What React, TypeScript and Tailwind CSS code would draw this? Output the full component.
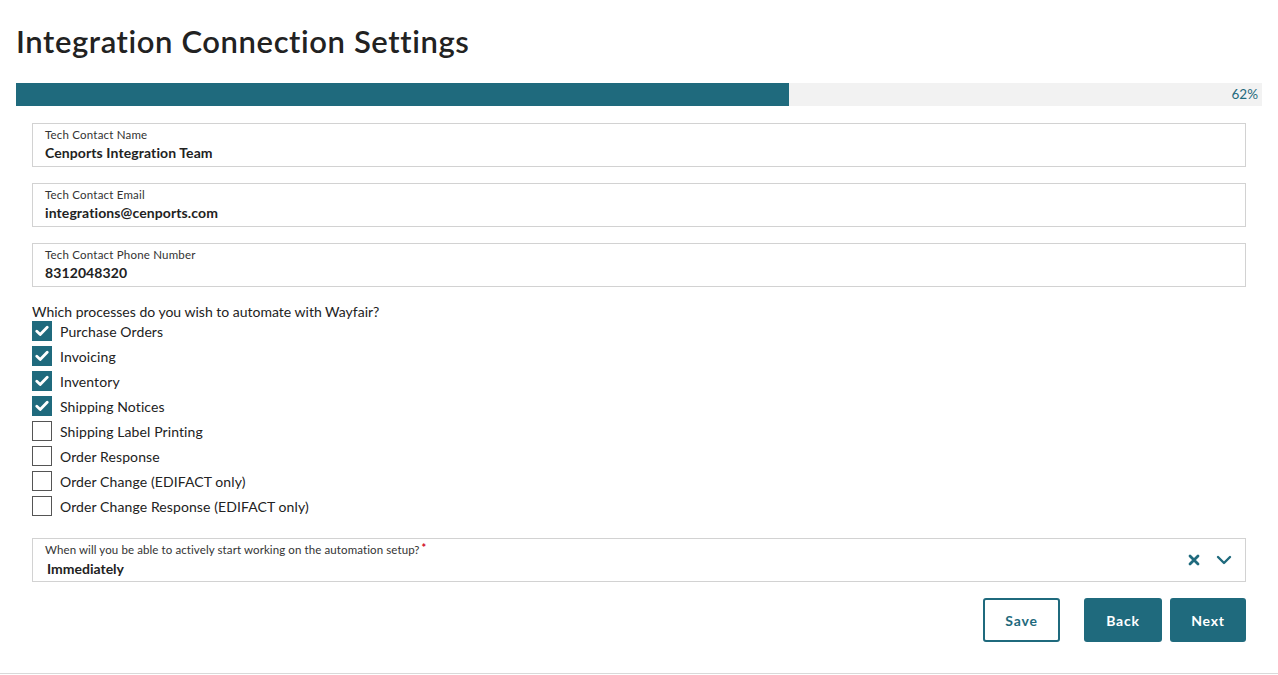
import { useState } from "react";

const font = { fontFamily: "Lato, 'Open Sans', sans-serif" };

const processes = [
  { label: "Purchase Orders", checked: true },
  { label: "Invoicing", checked: true },
  { label: "Inventory", checked: true },
  { label: "Shipping Notices", checked: true },
  { label: "Shipping Label Printing", checked: false },
  { label: "Order Response", checked: false },
  { label: "Order Change (EDIFACT only)", checked: false },
  { label: "Order Change Response (EDIFACT only)", checked: false },
];

const TextField = ({ label, value }: { label: string; value: string }) => (
  <div className="flex h-[44px] flex-col border border-[#d2d2d2] px-3 pt-[4px]">
    <span className="text-[11.5px] leading-[14px] tracking-[0.2px] text-[#333]">{label}</span>
    <span className="mt-[2px] text-[14px] font-bold leading-[18px] tracking-[0.1px] text-[#222]">
      {value}
    </span>
  </div>
);

export default function App() {
  const [checks, setChecks] = useState(processes.map((p) => p.checked));

  return (
    <div className="h-[675px] w-full bg-white" style={font}>
      <div className="flex h-[674px] flex-col border-b border-[#d9d9d9] px-4">
        <h1 className="mt-[21px] text-[31px] font-semibold leading-[40px] tracking-[0.6px] text-[#222]">
          Integration Connection Settings
        </h1>

        {/* progress */}
        <div className="mt-[22px] flex h-[23px] items-center bg-[#f2f2f2]">
          <div className="h-full w-[62%] bg-[#1f6a7d]" />
          <span className="ml-auto pr-[4px] text-[13.5px] text-[#1f6a7d]">62%</span>
        </div>

        <div className="mt-[17px] flex flex-col gap-4 px-4">
          <TextField label="Tech Contact Name" value="Cenports Integration Team" />
          <TextField label="Tech Contact Email" value="integrations@cenports.com" />
          <TextField label="Tech Contact Phone Number" value="8312048320" />
        </div>

        <div className="mt-[16px] px-4">
          <p className="text-[14px] leading-[18px] text-[#222]">
            Which processes do you wish to automate with Wayfair?
          </p>
          <div className="flex flex-col gap-[5px]">
            {processes.map((p, i) => (
              <label key={p.label} className="flex h-[20px] items-center gap-2">
                <button
                  type="button"
                  onClick={() =>
                    setChecks((c) => c.map((v, j) => (j === i ? !v : v)))
                  }
                  className={`flex h-[20px] w-[20px] items-center justify-center ${
                    checks[i]
                      ? "bg-[#1f6a7d]"
                      : "border border-[#555] bg-white"
                  }`}
                >
                  {checks[i] && (
                    <svg width="14" height="12" viewBox="0 0 14 12">
                      <path
                        d="M1.8 6.2 L5.2 9.4 L12.2 2.2"
                        fill="none"
                        stroke="white"
                        strokeWidth="2.8"
                        strokeLinecap="round"
                        strokeLinejoin="round"
                      />
                    </svg>
                  )}
                </button>
                <span className="text-[14px] tracking-[0.1px] text-[#222]">{p.label}</span>
              </label>
            ))}
          </div>
        </div>

        <div className="mt-[22px] px-4">
          <div className="flex h-[44px] items-center border border-[#d2d2d2] pl-3 pr-[13px]">
            <div className="flex flex-1 flex-col">
              <span className="text-[11.5px] leading-[14px] tracking-[0.1px] text-[#333]">
                When will you be able to actively start working on the automation setup?
                <span className="ml-[2px] align-top text-[11px] font-bold leading-[10px] text-[#d0021b]">*</span>
              </span>
              <span className="ml-[2px] mt-[3px] text-[14px] font-bold leading-[18px] text-[#222]">
                Immediately
              </span>
            </div>
            <div className="flex items-center gap-[16px]">
              <svg width="12" height="12" viewBox="0 0 12 12">
                <path
                  d="M2 2 L10 10 M10 2 L2 10"
                  stroke="#1f6a7d"
                  strokeWidth="2.8"
                  strokeLinecap="round"
                />
              </svg>
              <svg width="16" height="10" viewBox="0 0 16 10">
                <path
                  d="M2 2 L8 8 L14 2"
                  fill="none"
                  stroke="#1f6a7d"
                  strokeWidth="2.4"
                  strokeLinecap="round"
                  strokeLinejoin="round"
                />
              </svg>
            </div>
          </div>
        </div>

        <div className="mt-[16px] flex justify-end pr-4">
          <button className="h-[44px] w-[77px] rounded-[3px] border-2 border-[#1f6a7d] bg-white text-[14px] font-bold tracking-[0.8px] text-[#1f6a7d]">
            Save
          </button>
          <button className="ml-[24px] h-[44px] w-[78px] rounded-[3px] bg-[#1f6a7d] text-[14px] font-bold tracking-[0.8px] text-white">
            Back
          </button>
          <button className="ml-[8px] h-[44px] w-[76px] rounded-[3px] bg-[#1f6a7d] text-[14px] font-bold tracking-[0.8px] text-white">
            Next
          </button>
        </div>
      </div>
    </div>
  );
}
